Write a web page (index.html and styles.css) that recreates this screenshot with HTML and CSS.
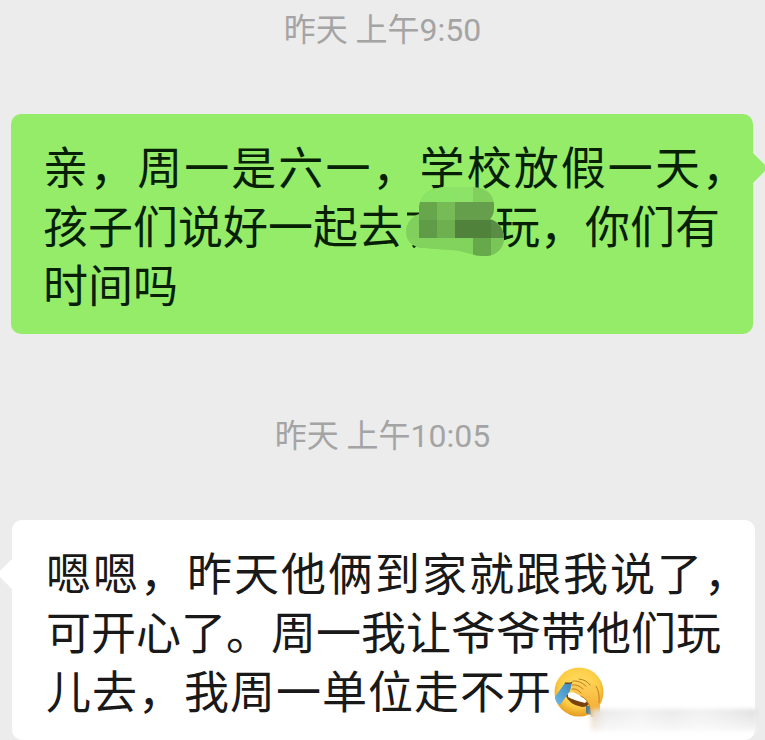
FILE: index.html
```html
<!DOCTYPE html>
<html lang="zh-CN">
<head>
<meta charset="utf-8">
<meta name="viewport" content="width=device-width, initial-scale=1">
<title>聊天</title>
<link rel="stylesheet" href="styles.css">
</head>
<body>
<main class="chat">
  <time class="stamp">昨天 上午9:50</time>
  <article class="bubble sent">
    <svg class="tail" viewBox="0 0 14 30" aria-hidden="true"><path d="M0 0L11 11Q15 15 11 19L0 30Z"/></svg>
    <p class="line spread">亲，周一是六一，学校放假一天，</p>
    <p class="line">孩子们说好一起去<span class="hidden-name"><svg class="mosaic" viewBox="0 0 100 72" aria-hidden="true">
      <defs><clipPath id="smear"><path d="M14 23C14 8 24 1 40 0H66C82 0 90 8 89 21Q89 28 85 32C94 35 99 42 99 51C99 62 90 70 78 69C66 69 60 63 46 63L20 61C7 61 1 53 1 45C1 36 7 29 14 27Z"/></clipPath></defs>
      <path d="M2 27H16M8 60L13 56" fill="none" stroke="#0b2506" stroke-width="3"/>
      <g clip-path="url(#smear)">
        <path fill="#81cf5c" d="M0 0H100V72H0z"/>
        <path fill="#8be466" d="M0 0H50V15H0z"/>
        <path fill="#8ce367" d="M50 0H68V15H50z"/>
        <path fill="#68a64b" d="M14 15H32V33H14z"/>
        <path fill="#76bb55" d="M32 15H50V33H32z"/>
        <path fill="#659f4b" d="M50 15H90V33H50z"/>
        <path fill="#609c47" d="M14 33H32V51H14z"/>
        <path fill="#6eb04f" d="M32 33H50V51H32z"/>
        <path fill="#50823c" d="M50 33H86V51H50z"/>
        <path fill="#598d43" d="M86 33H100V51H86z"/>
        <path fill="#82d35e" d="M0 51H68V72H0z"/>
        <path fill="#66a94b" d="M68 51H86V72H68z"/>
        <path fill="#79c557" d="M86 51H100V72H86z"/>
      </g></svg></span>玩，你们有</p>
    <p class="line">时间吗</p>
  </article>
  <time class="stamp">昨天 上午10:05</time>
  <article class="bubble received">
    <svg class="tail" viewBox="0 0 14 30" aria-hidden="true"><path d="M14 0L3 11Q-1 15 3 19L14 30Z"/></svg>
    <p class="line spread">嗯嗯，昨天他俩到家就跟我说了，</p>
    <p class="line">可开心了。周一我让爷爷带他们玩</p>
    <p class="line spread with-emoji">儿去，我周一单位走不开<svg class="emoji" viewBox="0 0 50 50" role="img" aria-label="捂脸">
      <defs>
        <radialGradient id="face" cx=".5" cy=".4" r=".62"><stop offset="0" stop-color="#ffe06a"/><stop offset=".65" stop-color="#fdcd45"/><stop offset="1" stop-color="#e3961c"/></radialGradient>
        <linearGradient id="hand" x1="0" y1="0" x2="0" y2="1"><stop offset="0" stop-color="#ffd65c"/><stop offset="1" stop-color="#f3a42c"/></linearGradient>
        <linearGradient id="tear" x1="1" y1="0" x2="0" y2="1"><stop offset="0" stop-color="#3d87b7"/><stop offset="1" stop-color="#69b9ea"/></linearGradient>
      </defs>
      <circle cx="25" cy="25" r="24.5" fill="url(#face)"/>
      <path d="M11 27Q22 29 35 36Q34 40 28 40Q15 38 11 27Z" fill="#7a430d"/>
      <path d="M14 26L20 25Q28 29 33 34L31 36Q19 33 14 30Z" fill="#fff"/>
      <path d="M11 16H18L16 24L6 38Q1 35 1 30Z" fill="url(#tear)"/>
      <path d="M11 16Q16 17 19 15" fill="none" stroke="#6c491a" stroke-width="1.5"/>
      <path d="M32 39H37V48L32 46Z" fill="#527d91"/>
      <path d="M18 17Q18 12 23 13Q31 9 39 15Q46 22 46 33V50H37Q37 41 34 36Q32 32 27 29Q23 27 19 25Q17 23 18 21Q16 19 18 17Z" fill="url(#hand)"/>
      <path d="M19 14Q25 13 32 19M18 18Q24 17 29 22M18 22Q23 21 27 26M25 12Q33 13 36 18M42 19Q46 25 45 36M27 29Q34 32 36 41" fill="none" stroke="#b97518" stroke-width=".9" stroke-linecap="round"/>
    </svg></p>
    <span class="smudge" aria-hidden="true"></span>
  </article>
</main>
</body>
</html>
```
FILE: styles.css
```css
* {
  box-sizing: border-box;
}

body {
  margin: 0;
  background: #ececec;
  color: #191919;
  font-family: Roboto, "Noto Sans CJK SC", sans-serif;
  overflow-x: hidden;
}

.chat {
  display: flex;
  flex-direction: column;
  overflow: hidden;
}

.stamp {
  padding: 10px 0 64px;
  color: #a4a4a4;
  font-size: 32px;
  line-height: 40px;
  text-align: center;
}

.bubble + .stamp {
  padding-top: 82px;
}

.bubble {
  position: relative;
  padding: 22px 32px 21px;
  border-radius: 10px;
}

.sent {
  margin: 0 12px 0 11px;
  background: #95ec69;
  color: #071f04;
}

.received {
  margin: 0 10px 0 12px;
  padding-left: 34px;
  background: #fff;
}

.tail {
  position: absolute;
  top: 39px;
  width: 14px;
  height: 30px;
}

.sent .tail {
  left: 100%;
  fill: #95ec69;
}

.received .tail {
  right: 100%;
  fill: #fff;
}

.line {
  height: 59px;
  margin: 0;
  font-family: "Noto Sans CJK SC", sans-serif;
  font-size: 45px;
  line-height: 59px;
  white-space: nowrap;
}

.spread {
  margin-right: -26px;
  text-align: justify;
  text-align-last: justify;
  white-space: normal;
}

.with-emoji {
  max-width: 558px;
}

.hidden-name {
  position: relative;
  display: inline-block;
  width: 92px;
  height: 45px;
  vertical-align: middle;
}

.mosaic {
  position: absolute;
  top: -22px;
  left: 2px;
  width: 100px;
  height: 72px;
}

.emoji {
  width: 50px;
  height: 50px;
  margin-left: 2px;
  vertical-align: -8px;
}

.smudge {
  position: absolute;
  right: -2px;
  bottom: 9px;
  width: 166px;
  height: 22px;
  background:
    linear-gradient(transparent, rgba(255, 255, 255, 0.7)),
    linear-gradient(90deg, #e0cdb4, #e9e9e9 8%, #f1f1f1 30%, #e8e8e8 48%, #f0f0f0 65%, #e9e9e9 82%, #dedede);
  filter: blur(2px);
}
```
